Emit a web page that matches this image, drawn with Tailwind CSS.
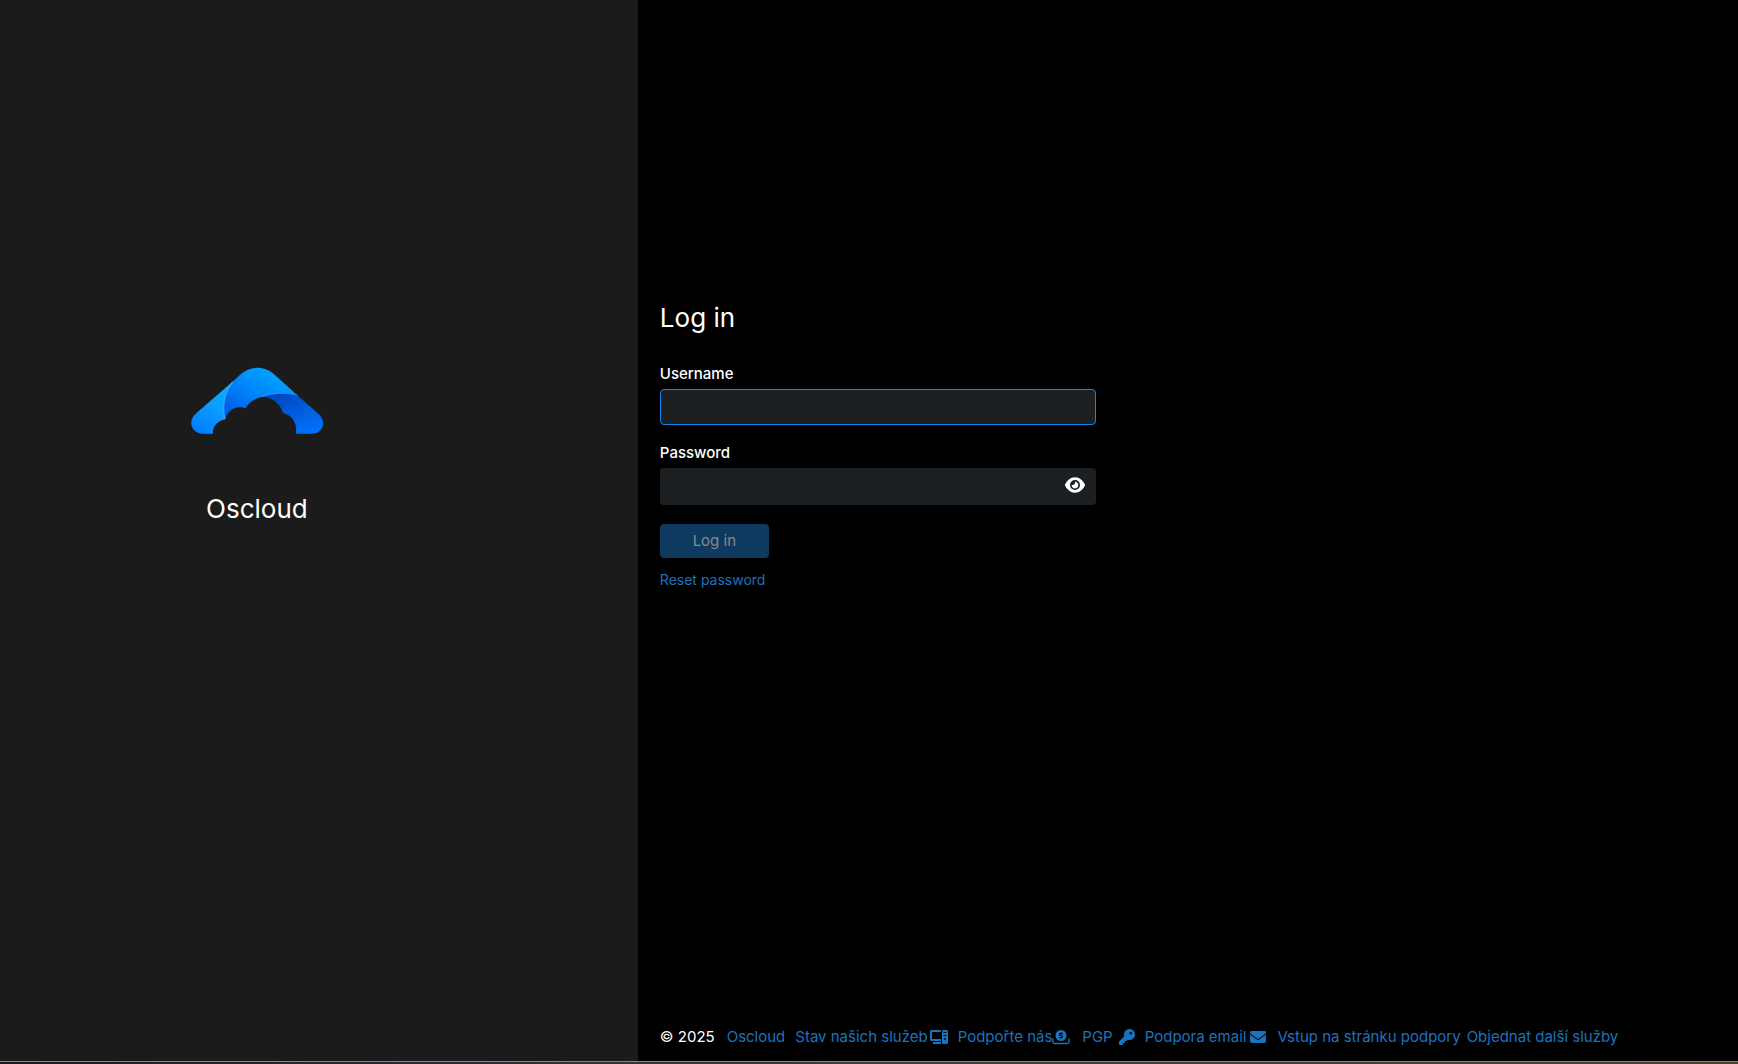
<!DOCTYPE html>
<html lang="cs">
<head>
    <meta charset="UTF-8">
    <meta name="viewport" content="width=device-width, initial-scale=1.0">
    <title>Oscloud - Log in</title>
    <script src="https://cdn.jsdelivr.net/npm/@tailwindcss/browser@4"></script>
</head>
<body class="flex min-h-screen flex-col bg-black font-['Inter',sans-serif] text-[15px] text-white">
    <div class="flex grow">
        <!-- Brand -->
        <aside class="w-[36.7%] shrink-0 bg-[#1b1b1b] pt-[34.5vh] pr-31">
            <div class="flex flex-col items-center gap-14">
                <svg class="h-[68px] w-[134px]" viewBox="60 50 402 204" role="img" aria-label="Oscloud">
                    <defs>
                        <linearGradient id="left" x1="0.8" y1="0" x2="0.3" y2="1">
                            <stop offset="0" stop-color="#08b0ff"/>
                            <stop offset="0.5" stop-color="#0c9cff"/>
                            <stop offset="1" stop-color="#0080ff"/>
                        </linearGradient>
                        <linearGradient id="middle" x1="0.8" y1="0.1" x2="0.1" y2="1">
                            <stop offset="0" stop-color="#00a8ff"/>
                            <stop offset="0.5" stop-color="#0082fa"/>
                            <stop offset="1" stop-color="#0056e0"/>
                        </linearGradient>
                        <linearGradient id="right" x1="0" y1="0" x2="0.8" y2="1">
                            <stop offset="0" stop-color="#0040b4"/>
                            <stop offset="1" stop-color="#0072fa"/>
                        </linearGradient>
                    </defs>
                    <path fill="url(#left)" d="M190 92L77 190C50 216 67 250 99 250H129C127 229 142 211 166 207L182 150Z"/>
                    <path fill="url(#right)" d="M276 138C302 126 352 124 382 135L445 190C474 216 455 250 426 250H378C381 216 367 195 339 188C331 158 305 141 276 140Z"/>
                    <path fill="url(#middle)" d="M190 92L212 72C240 46 285 46 312 72L382 135C350 124 302 130 274 141C252 145 234 158 227 174C202 163 171 178 166 207C157 170 162 124 190 92Z"/>
                    <path fill="none" stroke="#2ca6ff" stroke-width="4" d="M188 95C161 128 157 168 164 206"/>
                    <path fill="none" stroke="#1c94ff" stroke-width="3" d="M276 138C305 128 350 124 382 135"/>
                </svg>
                <h1 class="text-[26px] leading-9">Oscloud</h1>
            </div>
        </aside>

        <div class="flex grow flex-col pl-[22px]">
            <main class="grow pt-[28vh]">
                <form class="flex w-[436px] flex-col items-start">
                    <h2 class="mb-6 text-[26px] leading-10">Log in</h2>

                    <label for="username" class="mb-[3px] leading-6 font-medium">Username</label>
                    <input id="username" type="text" class="mb-4 h-9 w-full rounded border border-[#0e86ea] bg-[#1c1f22] px-3 outline-none">

                    <label for="password" class="mb-[3px] leading-6 font-medium">Password</label>
                    <div class="relative mb-[19px] w-full">
                        <input id="password" type="password" class="block h-[37px] w-full rounded bg-[#1c1f22] pr-10 pl-3 outline-none">
                        <button type="button" aria-label="Show password" class="absolute top-2 right-[11px]">
                            <svg class="h-[18px] w-5" viewBox="0 0 576 512" fill="currentColor">
                                <path d="M288 32c-81 0-145 37-193 81C48 157 17 208 3 244c-3 8-3 17 0 25 14 36 45 87 92 131 48 44 112 81 193 81s145-37 193-81c47-44 78-95 92-131 3-8 3-17 0-25-14-36-45-87-92-131-48-44-112-81-193-81zM144 256a144 144 0 1 1 288 0 144 144 0 1 1-288 0zm144-64c0 35-29 64-64 64-7 0-14-1-20-3-6-2-12 2-12 8 0 7 1 14 3 21 14 51 67 82 118 68s82-67 68-118c-12-42-48-69-89-71-6 0-9 5-7 11 2 6 3 13 3 20z"/>
                            </svg>
                        </button>
                    </div>

                    <button type="submit" disabled class="mb-3 h-[34px] w-[109px] rounded bg-[#0e3a5f] text-[#87898b]">Log in</button>
                    <a href="#" class="text-sm text-[#1a73bf]">Reset password</a>
                </form>
            </main>

            <footer class="flex items-center pb-3 leading-6 whitespace-nowrap text-[#1a73bf]">
                <span class="mr-3 text-white">© 2025</span>
                <a href="#" class="mr-2.5">Oscloud</a>
                <a href="#" class="mr-2.5 flex items-center gap-0.5">Stav našich služeb
                    <svg class="h-4 w-[18px]" viewBox="0 0 18 16" fill="currentColor">
                        <path d="M1.5 1H11v2H2v7h9v2H1.5Q0 12 0 10.500v-8Q0 1 1.500 1zM3 13h8v2H3z"/>
                        <path fill-rule="evenodd" d="M13.500 1h3Q18 1 18 2.500v11q0 1.500-1.500 1.500h-3q-1.500 0-1.500-1.500v-11Q12 1 13.500 1zM13.500 3v1h3V3zM13.500 6v1h3V6zM15 9a1 1 0 1 0 0 2a1 1 0 1 0 0-2z"/>
                    </svg>
                </a>
                <a href="#" class="mr-3 flex items-center">Podpořte nás
                    <svg class="h-4 w-[18px]" viewBox="0 0 18 16" fill="currentColor">
                        <path fill-rule="evenodd" d="M9 1a5.500 5.500 0 1 0 0 11a5.500 5.500 0 1 0 0-11zM8.500 3h1v1q1 0 1.500.5l-.4.9Q8.400 4.800 8.300 5.500C8.300 6.300 11.200 6 11.200 7.600Q11 8.900 9.500 9.100V10h-1v-.9Q7.500 9 6.700 8.600l.4-.9q2.500 1 2.700-.1C9.800 6.900 6.900 7.100 6.900 5.500Q7 4.300 8.500 4z"/>
                        <path d="M1 10v3q0 1.500 1.500 1.500h13q1.500 0 1.500-1.500v-3" fill="none" stroke="currentColor" stroke-width="1.300" stroke-linecap="round"/>
                    </svg>
                </a>
                <a href="#" class="mr-2.5 flex items-center gap-1">PGP
                    <svg class="h-4 w-[18px]" viewBox="-64 0 576 512" fill="currentColor">
                        <path d="M336 352c97 0 176-79 176-176S433 0 336 0 160 79 160 176c0 19 3 37 9 54L7 391c-4 5-7 11-7 17v80c0 13 11 24 24 24h80c13 0 24-11 24-24v-40h40c13 0 24-11 24-24v-40h40c6 0 13-3 17-7l33-34c17 6 35 9 54 9zM376 96a40 40 0 1 1 0 80 40 40 0 1 1 0-80z"/>
                    </svg>
                </a>
                <a href="#" class="mr-2.5 flex items-center gap-[3px]">Podpora email
                    <svg class="h-4 w-[18px]" viewBox="-32 0 576 512" fill="currentColor">
                        <path d="M48 64C22 64 0 86 0 112c0 15 7 29 19 38l218 164c11 8 27 8 38 0l218-164c12-9 19-23 19-38 0-26-22-48-48-48H48zM0 176v208c0 35 29 64 64 64h384c35 0 64-29 64-64V176L294 339c-22 17-54 17-76 0L0 176z"/>
                    </svg>
                </a>
                <a href="#" class="mr-1.5">Vstup na stránku podpory</a>
                <a href="#">Objednat další služby</a>
            </footer>
        </div>
    </div>
    <!-- Strip under the page -->
    <div class="h-[3px] border-t border-[#858585] bg-linear-to-r from-[#1d1a24] via-[#3c3d3c] to-[#4a4030]"></div>
</body>
</html>
